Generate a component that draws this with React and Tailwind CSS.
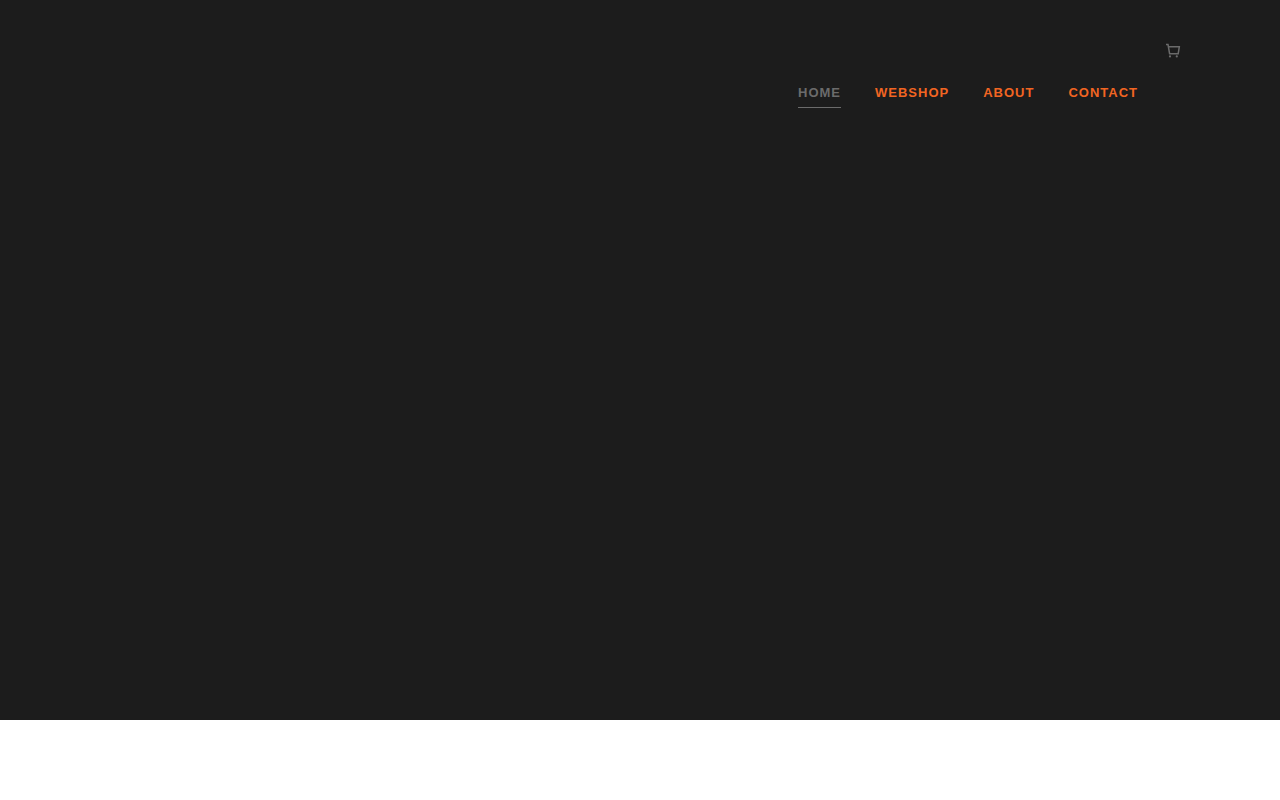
const links = [
  { label: 'HOME', active: true },
  { label: 'WEBSHOP' },
  { label: 'ABOUT' },
  { label: 'CONTACT' },
];

const CartIcon = () => (
  <svg width="16" height="16" viewBox="0 0 16 16" fill="none" stroke="currentColor" strokeWidth="1.5" className="block">
    <path d="M1 1.5h2l1.6 9.2h8.6l1.1-6.9H3.4" />
    <circle cx="5" cy="13.4" r="1.1" fill="currentColor" stroke="none" />
    <circle cx="11.8" cy="13.4" r="1.1" fill="currentColor" stroke="none" />
  </svg>
);

const App = () => {
  return (
    <div className="min-h-[800px] bg-white font-['Liberation_Sans',Arial,sans-serif]">
      <header className="h-[720px] bg-[#1c1c1c] pt-[43px] pr-[99px]">
        <div className="flex justify-end">
          <a href="#cart" className="block text-[#6b6b6b]">
            <CartIcon />
          </a>
        </div>
        <nav className="mt-[17px] pr-[43px] flex justify-end gap-[34px]">
          {links.map((link) => (
            <a
              key={link.label}
              href={`#${link.label.toLowerCase()}`}
              className={
                link.active
                  ? 'block h-[32px] pt-[9px] border-b border-[#6b6b6b] text-[13px] leading-[16px] font-bold tracking-[1px] text-[#6b6b6b]'
                  : 'block h-[32px] pt-[9px] text-[13px] leading-[16px] font-bold tracking-[1px] text-[#f26522]'
              }
            >
              {link.label}
            </a>
          ))}
        </nav>
      </header>
    </div>
  );
};

export default App;
